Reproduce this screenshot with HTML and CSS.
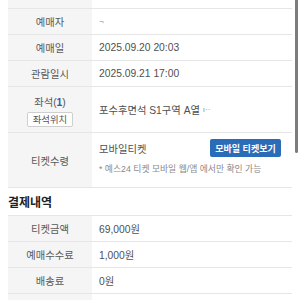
FILE: index.html
```html
<!DOCTYPE html>
<html lang="ko">
<head>
    <meta charset="UTF-8">
    <meta name="viewport" content="width=device-width, initial-scale=1.0">
    <title>예매 상세</title>
    <link rel="stylesheet" href="styles.css">
</head>
<body>
    <div class="page">
        <div class="info-table">
            <div class="row row-top">
                <div class="label"></div>
                <div class="value"></div>
            </div>
            <div class="row">
                <div class="label">예매자</div>
                <div class="value"><span class="masked">¬</span></div>
            </div>
            <div class="row">
                <div class="label">예매일</div>
                <div class="value">2025.09.20 20:03</div>
            </div>
            <div class="row">
                <div class="label">관람일시</div>
                <div class="value">2025.09.21 17:00</div>
            </div>
            <div class="row row-seat">
                <div class="label label-stack">
                    <span>좌석(<b class="count">1</b>)</span>
                    <button class="seat-button">좌석위치</button>
                </div>
                <div class="value">포수후면석 S1구역 A열&nbsp;<span class="masked">ı··</span></div>
            </div>
            <div class="row row-ticket">
                <div class="label">티켓수령</div>
                <div class="value value-stack">
                    <div class="ticket-line">
                        <span>모바일티켓</span>
                        <button class="mobile-button">모바일 티켓보기</button>
                    </div>
                    <div class="note">* 예스24 티켓 모바일 웹/앱 에서만 확인 가능</div>
                </div>
            </div>
        </div>

        <h2 class="section-title">결제내역</h2>

        <div class="info-table pay-table">
            <div class="row">
                <div class="label">티켓금액</div>
                <div class="value">69,000원</div>
            </div>
            <div class="row">
                <div class="label">예매수수료</div>
                <div class="value">1,000원</div>
            </div>
            <div class="row">
                <div class="label">배송료</div>
                <div class="value">0원</div>
            </div>
            <div class="row">
                <div class="label">&nbsp;</div>
                <div class="value"></div>
            </div>
        </div>
    </div>
    <div class="scroll-thumb"></div>
</body>
</html>
```

FILE: styles.css
```css
body {
    font-family: 'Liberation Sans', 'Noto Sans CJK KR', sans-serif;
    background-color: #ffffff;
    color: #4f4f4f;
    margin: 0;
    padding: 0;
    font-size: 10.3px;
    overflow: hidden;
}
.page {
    padding: 0 8px;
}
.row {
    display: grid;
    grid-template-columns: 84px 1fr;
    min-height: 25px;
    border-bottom: 1px solid #e6e6e6;
}
.row-top {
    min-height: 8px;
}
.label {
    background-color: #f5f5f5;
    color: #595959;
    display: flex;
    align-items: center;
    justify-content: center;
}
.value {
    display: flex;
    align-items: center;
    padding: 0 11px 0 7px;
}
.masked {
    color: #8c8c8c;
    font-size: 8px;
}
.row-seat {
    min-height: 45px;
}
.label-stack {
    flex-direction: column;
    gap: 3px;
    padding-top: 2px;
}
.count {
    color: #1d5fb1;
}
.seat-button {
    font-family: inherit;
    font-size: 9.4px;
    color: #555555;
    background-color: #ffffff;
    border: 1px solid #cfcfcf;
    border-radius: 2px;
    padding: 0 5px;
    height: 15px;
    line-height: 13px;
}
.row-ticket {
    min-height: 54px;
}
.value-stack {
    flex-direction: column;
    align-items: stretch;
    justify-content: flex-start;
    padding-top: 6px;
}
.ticket-line {
    display: flex;
    justify-content: space-between;
    align-items: center;
}
.mobile-button {
    font-family: inherit;
    font-size: 9px;
    font-weight: bold;
    color: #ffffff;
    background-color: #2b6cb8;
    border: none;
    border-radius: 2px;
    height: 18px;
    width: 71px;
    padding: 0;
}
.note {
    color: #8a8a8a;
    font-size: 8.8px;
    margin-top: 5px;
}
.section-title {
    font-size: 12px;
    color: #222222;
    margin: 0;
    height: 27px;
    line-height: 31px;
}
.pay-table {
    border-top: 1px solid #e6e6e6;
}
.scroll-thumb {
    position: absolute;
    top: 0;
    left: 295px;
    width: 3px;
    height: 153px;
    background-color: #7d7d7d;
    border-radius: 0 0 2px 2px;
}
```
